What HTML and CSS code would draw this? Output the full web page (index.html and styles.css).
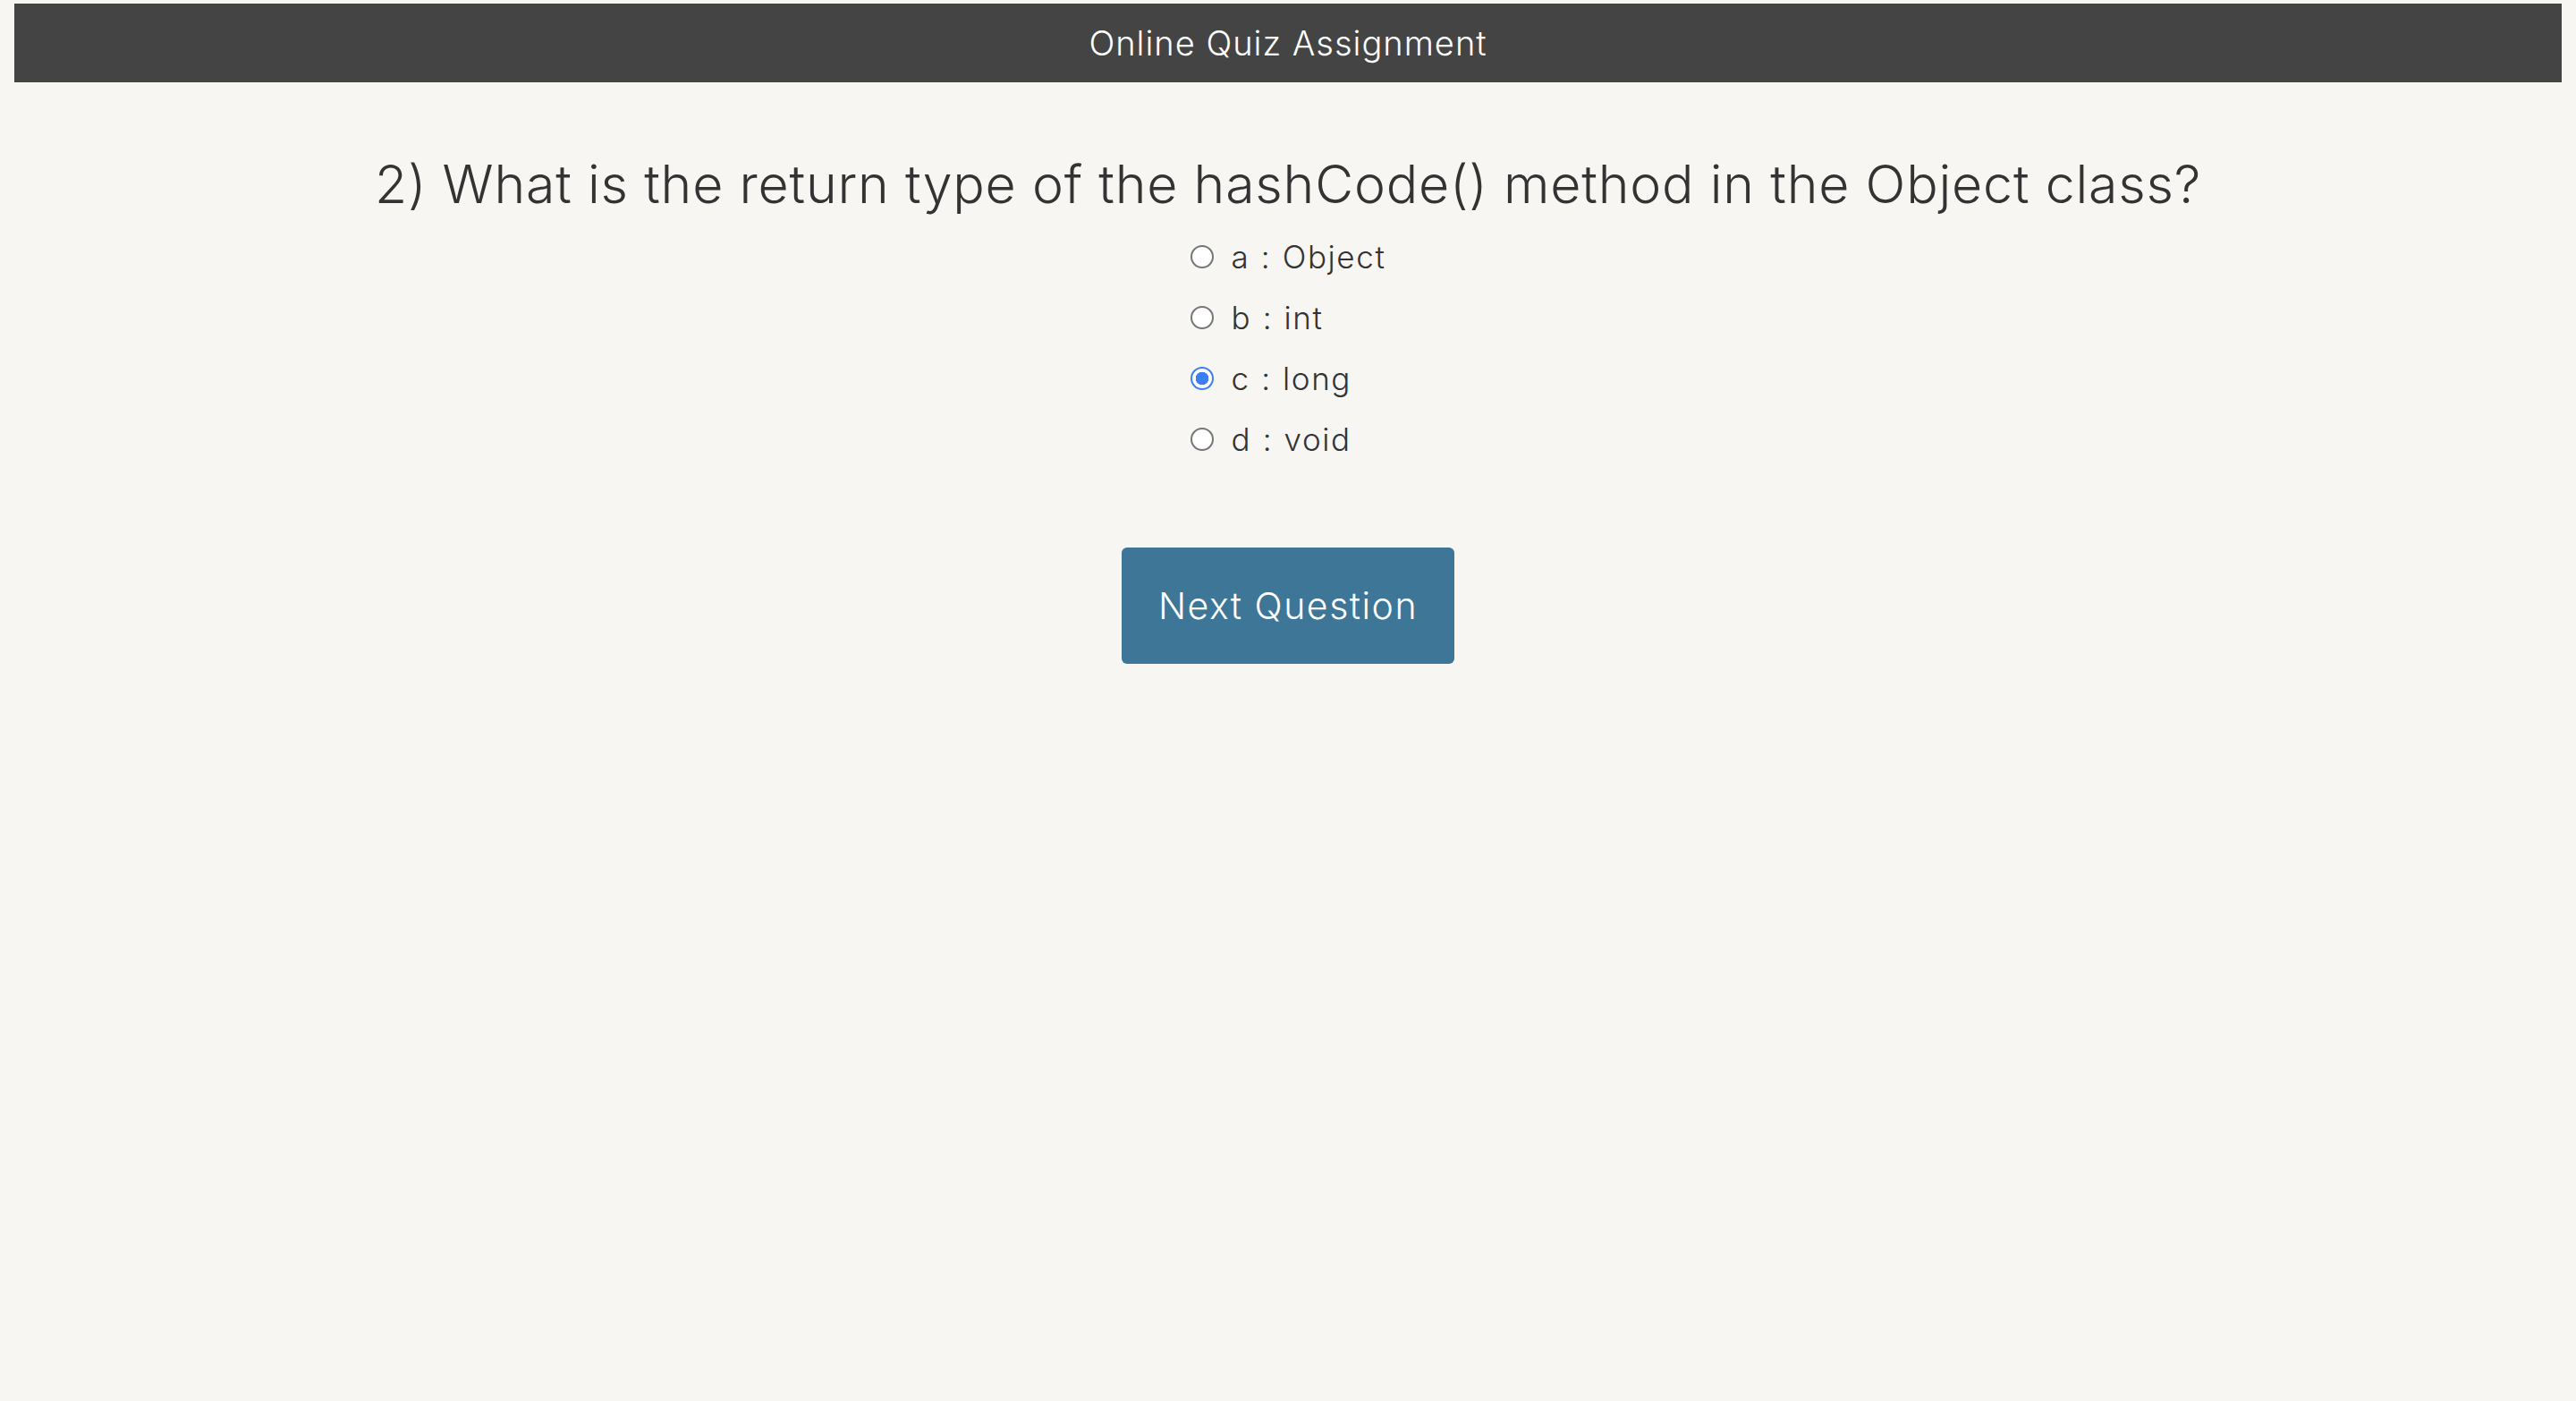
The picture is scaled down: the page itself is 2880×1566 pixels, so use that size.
FILE: index.html
```html
<!DOCTYPE html>
<html lang="en">
<head>
<meta charset="utf-8">
<title>Online Quiz Assignment</title>
<link rel="stylesheet" href="styles.css">
</head>
<body>
<header class="topbar">Online Quiz Assignment</header>
<main class="quiz">
  <h2 class="question">2) What is the return type of the hashCode() method in the Object class?</h2>
  <form class="options">
    <label class="option"><input type="radio" name="q" class="radio"><span>a : Object</span></label>
    <label class="option"><input type="radio" name="q" class="radio"><span>b : int</span></label>
    <label class="option"><input type="radio" name="q" class="radio" checked><span>c : long</span></label>
    <label class="option"><input type="radio" name="q" class="radio"><span>d : void</span></label>
  </form>
  <button class="next" type="button">Next Question</button>
</main>
</body>
</html>
```
FILE: styles.css
```css
html, body {
  background: #f7f6f2;
}
body {
  margin: 4px 16px 0;
  font-family: Inter, "Open Sans", sans-serif;
  color: #333;
}
.topbar {
  height: 88px;
  background: #444444;
  color: #fff;
  display: flex;
  align-items: center;
  justify-content: center;
  font-size: 38px;
  font-weight: 300;
  letter-spacing: 1px;
}
.quiz {
  display: flex;
  flex-direction: column;
  align-items: center;
}
.question {
  margin: 78px 0 0;
  font-size: 59px;
  line-height: 72px;
  font-weight: 300;
  letter-spacing: 0.8px;
  color: #333;
}
.options {
  margin-top: 11px;
  display: flex;
  flex-direction: column;
  align-items: flex-start;
}
.option {
  height: 68px;
  display: flex;
  align-items: center;
  font-size: 35px;
  font-weight: 300;
  letter-spacing: 1.6px;
  word-spacing: 1px;
  color: #333;
}
.radio {
  appearance: none;
  -webkit-appearance: none;
  width: 26px;
  height: 26px;
  margin: 0 20px 0 0;
  border: 2px solid #767676;
  border-radius: 50%;
  background: #fff;
  box-sizing: border-box;
}
.radio:checked {
  border: 2px solid #3b7ef5;
  background: radial-gradient(circle, #3b7ef5 0 7px, #fff 7.5px);
}
.next {
  margin-top: 87px;
  width: 372px;
  height: 130px;
  border: none;
  border-radius: 6px;
  background: #3d7697;
  color: #fff;
  font-family: Inter, "Open Sans", sans-serif;
  font-size: 41px;
  font-weight: 300;
  letter-spacing: 1.5px;
}
```
